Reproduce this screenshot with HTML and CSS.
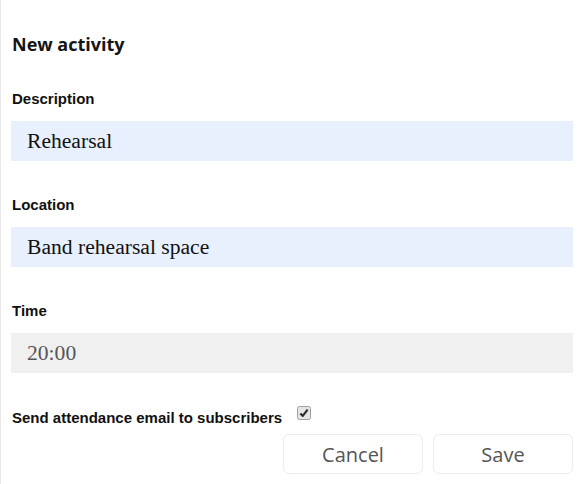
FILE: index.html
```html
<!DOCTYPE html>
<html>
<head>
<meta charset="utf-8">
<link rel="stylesheet" href="styles.css">
</head>
<body>
<div class="panel">
  <h1 class="title">New activity</h1>
  <div class="field">
    <label class="label">Description</label>
    <input class="input" type="text" value="Rehearsal">
  </div>
  <div class="field">
    <label class="label">Location</label>
    <input class="input" type="text" value="Band rehearsal space">
  </div>
  <div class="field">
    <label class="label">Time</label>
    <input class="input input-disabled" type="text" value="20:00" disabled>
  </div>
  <div class="check-row">
    <span class="check-label">Send attendance email to subscribers</span>
    <svg class="checkbox" width="14" height="14" viewBox="0 0 14 14">
      <rect x="0.5" y="0.5" width="13" height="13" rx="2" fill="#e4e4e4" stroke="#a0a0a0"/>
      <path d="M3.4 7.4 L5.8 9.9 L10.6 3.6" fill="none" stroke="#2a2a2a" stroke-width="2.1" stroke-linejoin="round"/>
    </svg>
  </div>
  <div class="actions">
    <button class="btn">Cancel</button>
    <button class="btn">Save</button>
  </div>
</div>
</body>
</html>
```

FILE: styles.css
```css
html, body {
  margin: 0;
  padding: 0;
  background: #ffffff;
}

.panel {
  border-left: 1px solid #e8e8e8;
  min-height: 484px;
  box-sizing: border-box;
  padding: 32px 10px 0 10px;
  display: flex;
  flex-direction: column;
  font-family: "Liberation Sans", Arial, sans-serif;
  color: #111;
}

.title {
  margin: 0;
  font-family: "Open Sans", sans-serif;
  font-weight: 700;
  font-size: 18px;
  line-height: 24px;
  color: #151515;
  padding-left: 1px;
}

.field {
  display: flex;
  flex-direction: column;
  margin-top: 35px;
}

.field + .field {
  margin-top: 36px;
}

.label {
  font-size: 15px;
  font-weight: 700;
  line-height: 16px;
  padding-left: 1px;
  margin-bottom: 14px;
}

.input {
  height: 40px;
  box-sizing: border-box;
  border: none;
  outline: none;
  margin: 0;
  padding: 0 16px;
  background: #e8f0fe;
  font-family: "Liberation Serif", "Times New Roman", serif;
  font-size: 21.6px;
  color: #111;
  width: 100%;
}

.input-disabled {
  background: #f0f0f0;
  color: #555;
  -webkit-text-fill-color: #555;
}

.check-row {
  display: flex;
  align-items: flex-start;
  margin-top: 34px;
  height: 16px;
}

.check-label {
  font-size: 15px;
  font-weight: 700;
  line-height: 16px;
  padding-left: 1px;
  padding-top: 3px;
}

.checkbox {
  margin-left: 15px;
  margin-top: -1px;
}

.actions {
  display: flex;
  justify-content: flex-end;
  gap: 10px;
  margin-top: 11px;
}

.btn {
  width: 140px;
  height: 40px;
  box-sizing: border-box;
  border: 1px solid #ececec;
  border-radius: 6px;
  background: #ffffff;
  font-family: "Open Sans", sans-serif;
  font-size: 20px;
  color: #555;
  padding: 0;
}
```
